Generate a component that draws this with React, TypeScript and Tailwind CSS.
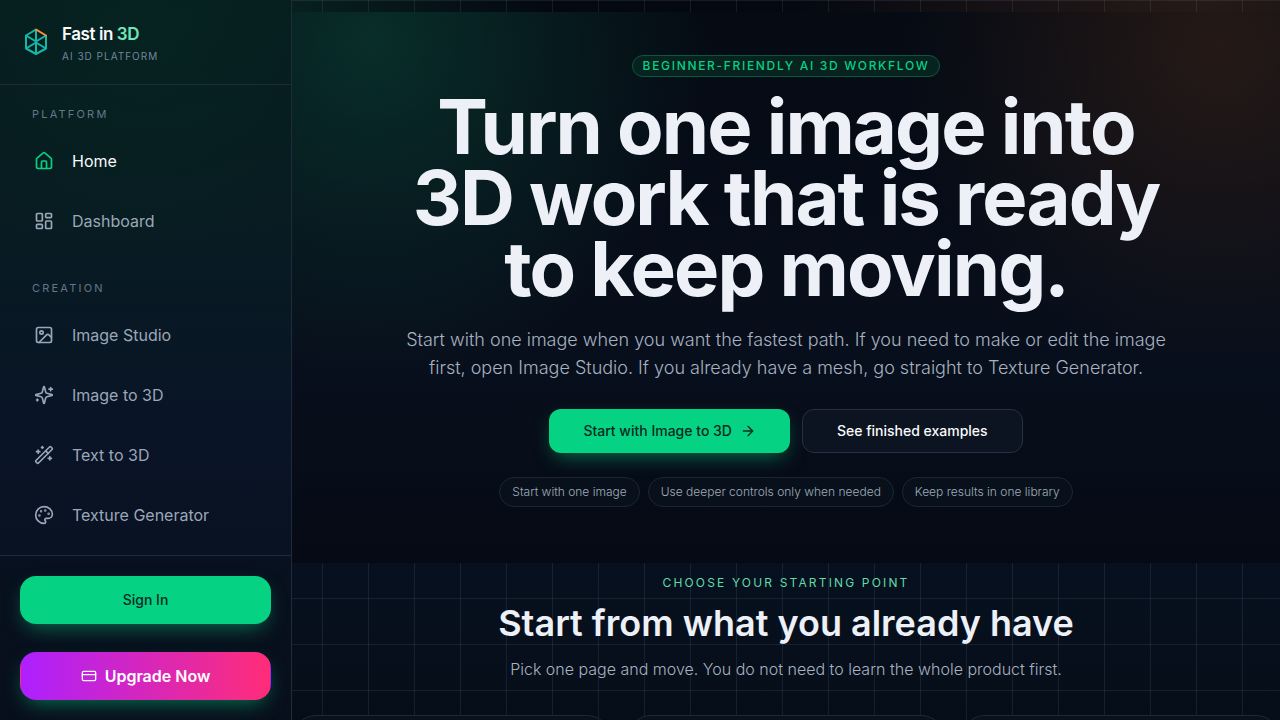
import type { LucideIcon } from "lucide-react";
import type { ComponentType } from "react";
import {
  ArrowRight,
  CreditCard,
  House,
  Image,
  LayoutDashboard,
  Palette,
  WandSparkles,
} from "lucide-react";
import clsx from "clsx";

type NavItem = {
  label: string;
  icon: LucideIcon | ComponentType<{ className?: string }>;
  active?: boolean;
};

function SparklesIcon({ className }: { className?: string }) {
  return (
    <svg
      viewBox="0 0 24 24"
      className={className}
      fill="none"
      stroke="currentColor"
      strokeWidth="2"
      strokeLinecap="round"
      strokeLinejoin="round"
    >
      <path d="M9.937 15.5A2 2 0 0 0 8.5 14.063l-6.135-1.582a.5.5 0 0 1 0-.962L8.5 9.936A2 2 0 0 0 9.937 8.5l1.582-6.135a.5.5 0 0 1 .963 0L14.063 8.5A2 2 0 0 0 15.5 9.937l6.135 1.581a.5.5 0 0 1 0 .964L15.5 14.063a2 2 0 0 0-1.437 1.437l-1.582 6.135a.5.5 0 0 1-.963 0z" />
      <path d="M20 3v4M22 5h-4M4 17v2M5 18H3" />
    </svg>
  );
}

const NAV: { title: string; items: NavItem[] }[] = [
  {
    title: "Platform",
    items: [
      { label: "Home", icon: House, active: true },
      { label: "Dashboard", icon: LayoutDashboard },
    ],
  },
  {
    title: "Creation",
    items: [
      { label: "Image Studio", icon: Image },
      { label: "Image to 3D", icon: SparklesIcon },
      { label: "Text to 3D", icon: WandSparkles },
      { label: "Texture Generator", icon: Palette },
    ],
  },
];

const HIGHLIGHTS = [
  "Start with one image",
  "Use deeper controls only when needed",
  "Keep results in one library",
];

function Logo() {
  return (
    <svg viewBox="0 0 32 32" className="size-8 shrink-0" fill="none" strokeWidth="2" strokeLinejoin="round">
      <path d="M16 3.5 6 9.5v13l10 5.500 10-5.500v-13M16 3.500v24M6 9.500l10 6 10-6M6 22.500l10-6 10 6" stroke="#14b8a6" />
      <path d="m16 3.500 10 6" stroke="#fb923c" strokeLinecap="round" />
    </svg>
  );
}

function Sidebar() {
  return (
    <aside className="flex w-73 shrink-0 flex-col border-r border-[#202b39] bg-[radial-gradient(circle_at_50%_0%,#05282299_0%,transparent_260px),linear-gradient(180deg,#061b1e_0%,#081c22_30%,#091426_60%,#080f1d_100%)]">
      <a href="#" className="flex h-[85px] items-center gap-2.5 border-b border-[#202b39] px-5">
        <Logo />
        <span className="pt-1">
          <span className="block text-[17px] leading-6 font-semibold tracking-tight text-slate-50">
            Fast in <span className="text-[#6ee7b7]">3D</span>
          </span>
          <span className="block text-[10px] leading-5 tracking-widest text-slate-400/80 uppercase">
            AI 3D Platform
          </span>
        </span>
      </a>

      <nav className="min-h-0 flex-1 overflow-hidden px-4 pt-5">
        {NAV.map((group) => (
          <div key={group.title} className="mb-[34px]">
            <h2 className="mb-3.5 px-4 text-[11px] leading-[18px] tracking-[0.2em] text-slate-400/70 uppercase">
              {group.title}
            </h2>
            <ul className="space-y-3">
              {group.items.map(({ label, icon: Icon, active }) => (
                <li key={label}>
                  <a
                    href="#"
                    className={clsx(
                      "flex h-12 items-center gap-[18px] px-[18px] text-base",
                      active ? "text-slate-50" : "text-[#9ba7b8]",
                    )}
                  >
                    <Icon className={clsx("size-5", active && "text-[#05d183]")} />
                    {label}
                  </a>
                </li>
              ))}
            </ul>
          </div>
        ))}
      </nav>

      <div className="space-y-7 border-t border-[#202b39] bg-[#070f1c]/50 p-5">
        <button className="h-12 w-full rounded-2xl bg-[#05d383] text-sm font-medium text-[#062b20] shadow-[0_8px_20px_-6px_#05d38388]">
          Sign In
        </button>
        <button className="flex h-12 w-full items-center justify-center gap-2 rounded-2xl border border-transparent bg-linear-to-r/srgb from-[#ad20ff] to-[#ff2d78] text-base font-semibold text-white shadow-[0_8px_20px_-6px_#05d38388]">
          <CreditCard className="size-4" />
          Upgrade Now
        </button>
      </div>
    </aside>
  );
}

function Hero() {
  return (
    <section className="bg-[radial-gradient(circle_at_8%_5%,#0a453899_0%,transparent_340px),radial-gradient(circle_at_94%_6%,#3a231899_0%,transparent_320px),linear-gradient(180deg,#050a13_0%,#080f1c_66%,#050a14_100%)] px-6 pt-[43px] pb-14 text-center">
      <p className="mx-auto flex h-[22px] w-fit items-center rounded-full border border-[#075940] bg-[#07221f] px-2.5 text-xs font-medium tracking-[0.14em] text-[#05d183] uppercase">
        Beginner-friendly AI 3D workflow
      </p>
      <h1 className="mx-auto mt-3.5 max-w-[780px] text-[76px] leading-[71px] font-bold tracking-tight text-[#edf1f7]">
        Turn one image into 3D work that is ready to keep moving.
      </h1>
      <p className="mx-auto mt-[22px] max-w-[780px] text-lg leading-7 font-light text-[#a7b1c0]">
        Start with one image when you want the fastest path. If you need to make or edit the image first, open Image
        Studio. If you already have a mesh, go straight to Texture Generator.
      </p>
      <div className="mt-[27px] flex justify-center gap-3">
        <button className="flex h-11 items-center gap-2 rounded-xl bg-[#05d383] px-[34px] text-sm font-medium text-[#062b20] shadow-[0_8px_20px_-6px_#05d38388]">
          Start with Image to 3D
          <ArrowRight className="size-4" />
        </button>
        <button className="h-11 rounded-xl border border-[#253044] bg-[#0c1422] px-[34px] text-sm font-medium text-slate-50">
          See finished examples
        </button>
      </div>
      <ul className="mt-6 flex justify-center gap-2">
        {HIGHLIGHTS.map((text) => (
          <li
            key={text}
            className="flex h-[30px] items-center rounded-full border border-[#1d2734] bg-[#08111b] px-3 text-xs font-light text-[#a0abba]"
          >
            {text}
          </li>
        ))}
      </ul>
    </section>
  );
}

function StartingPoints() {
  return (
    <section className="pt-2.5 text-center">
      <p className="text-xs leading-5 tracking-[0.18em] text-[#5fdcab] uppercase">Choose your starting point</p>
      <h2 className="mt-2.5 text-4xl leading-10 font-semibold text-[#edf1f7]">Start from what you already have</h2>
      <p className="mt-3.5 text-base font-light text-[#a7b1c0]">
        Pick one page and move. You do not need to learn the whole product first.
      </p>
      <div className="mt-[34px] grid grid-cols-3 gap-4">
        {[0, 1, 2].map((card) => (
          <div key={card} className="h-64 rounded-3xl border border-[#1e2838] bg-[#0a101c]" />
        ))}
      </div>
    </section>
  );
}

export default function App() {
  return (
    <div className="flex h-screen overflow-hidden bg-[#07101e] font-['Inter',sans-serif]">
      <Sidebar />
      {/* 46px grid, shifted so that it lines up with the window's edge */}
      <main className="min-w-0 flex-1 bg-[linear-gradient(90deg,#94a3b81f_1px,transparent_1px),linear-gradient(180deg,#94a3b81f_1px,transparent_1px),radial-gradient(circle_at_92%_0%,#261a17_0%,transparent_420px),radial-gradient(circle_at_0%_0%,#07201f_0%,transparent_260px),linear-gradient(180deg,#040811_0%,#07101e_80%,#050e18_100%)] bg-[size:46px_46px,46px_46px,auto,auto,auto] bg-[position:30px_0,0_0,0_0,0_0,0_0] pt-3">
        <Hero />
        <StartingPoints />
      </main>
    </div>
  );
}
